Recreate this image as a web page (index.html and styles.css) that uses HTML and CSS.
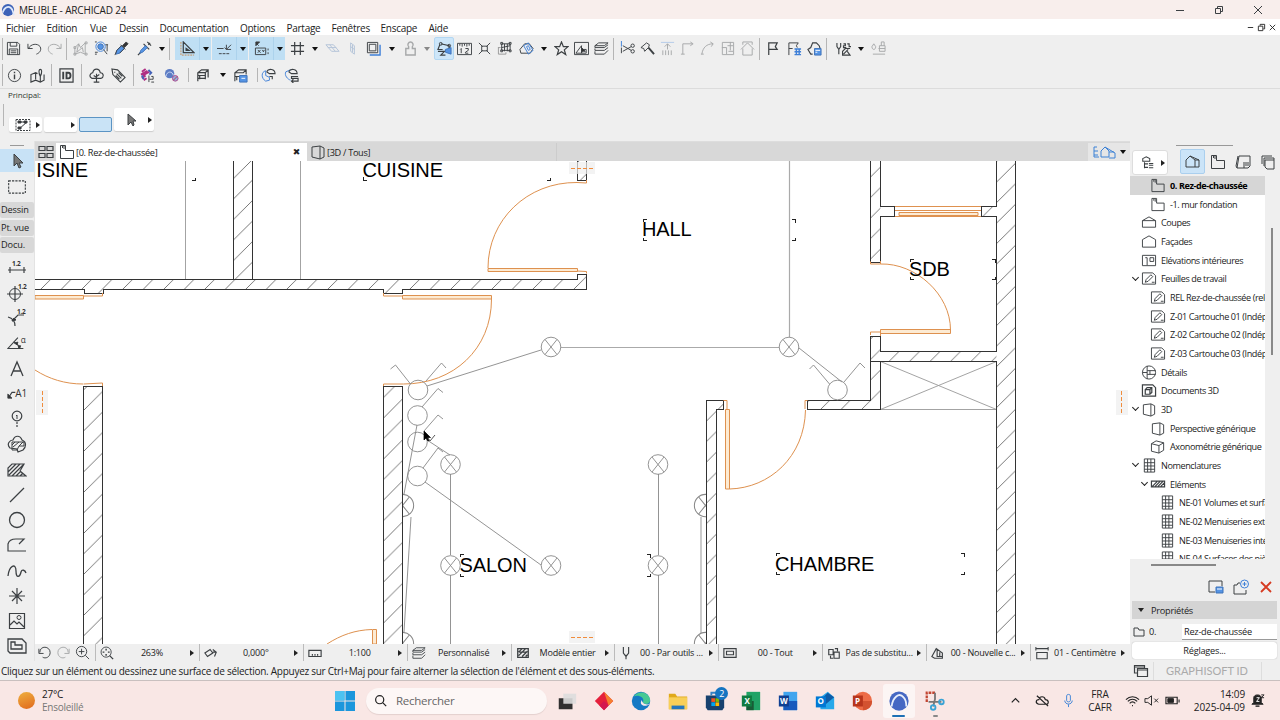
FILE: index.html
```html
<!DOCTYPE html>
<html lang="fr">

<head>
    <meta charset="UTF-8">
    <meta name="viewport" content="width=device-width, initial-scale=1.0">
    <title>MEUBLE - ARCHICAD 24</title>
    <link rel="stylesheet" href="styles.css">
</head>

<body>
    <!-- Shared symbols -->
    <svg class="defs" width="0" height="0">
        <symbol id="story" viewBox="0 0 16 16"><path d="M1.500 1.500h5v5h8v8h-13zM3.500 2v2M5 2v3"/></symbol>
        <symbol id="sheet" viewBox="0 0 16 16"><path d="M1 2h11l3 3v9H1zM4 12l1-3 5-5 2 2-5 5zM11 12h3"/></symbol>
        <symbol id="box3d" viewBox="0 0 16 16"><path d="M2 3l8-1v13l-8-2zM10 2l4 2v9l-4 2"/></symbol>
        <symbol id="grid" viewBox="0 0 16 16"><path d="M3 1h11v14H3zM3 5h11M3 8.500h11M3 12h11M6.500 1v14M10 1v14"/></symbol>
        <symbol id="lamp" viewBox="-11 -11 22 22"><circle r="9.800"/><path d="M-6 -7.500L6 7.500M6 -7.500L-6 7.500"/></symbol>
        <symbol id="layers" viewBox="0 0 16 16"><path d="M5 2h10l-4 3H1zM1 5v2h10l4-3M1 8v2h10l4-3M1 11v3h10l4-4"/></symbol>
        <symbol id="house" viewBox="0 0 16 16"><path d="M1 13V6l4-4 5 4v7zM5 2l9 4v7h-4M10 6h4"/></symbol>
    </svg>

    <!-- Title bar -->
    <header class="titlebar">
        <svg class="logo" viewBox="0 0 16 16"><circle cx="8" cy="8" r="7" fill="#3f63b8"/><path d="M2 11C4 4 10 2 13 8l2 6" stroke="#dfe8fb" stroke-width="2" fill="none"/></svg>
        <span class="title">MEUBLE - ARCHICAD 24</span>
        <div class="wincontrols">
            <svg class="ic" viewBox="0 0 16 16"><path d="M4 8.500h8"/></svg>
            <svg class="ic" viewBox="0 0 16 16"><path d="M4.500 6.500h5v5h-5zM6.500 6V4.500h5v5H10"/></svg>
            <svg class="ic" viewBox="0 0 16 16"><path d="M4 4l8 8M12 4l-8 8"/></svg>
        </div>
    </header>

    <nav class="menubar">
        <span class="m-fichier">Fichier</span>
        <span class="m-edition">Edition</span>
        <span class="m-vue">Vue</span>
        <span class="m-dessin">Dessin</span>
        <span class="m-doc">Documentation</span>
        <span class="m-options">Options</span>
        <span class="m-partage">Partage</span>
        <span class="m-fenetres">Fenêtres</span>
        <span class="m-enscape">Enscape</span>
        <span class="m-aide">Aide</span>
        <div class="doccontrols">
            <svg viewBox="0 0 10 10"><path d="M2 5h6"/></svg>
            <svg viewBox="0 0 10 10"><path d="M1.500 3.500h5v5h-5zM3.500 3V1.500h5v5H7"/></svg>
            <svg viewBox="0 0 10 10"><path d="M2 2l6 6M8 2L2 8"/></svg>
        </div>
    </nav>

    <!-- Toolbars -->
    <div class="toolbar first">
        <i class="sep g2"></i>
        <b class="tool"><svg class="ic" viewBox="0 0 16 16"><path d="M1.500 1.500h11l2 2v11h-13zM4.500 1.500v4h7v-4M3.500 14.500v-6h9v6M5 10.500h6M5 12.500h6"/></svg></b>
        <b class="tool g1"><svg class="ic" viewBox="0 0 16 16"><path d="M1 3v5h5M1.500 8C4 3 11 2 14 6c2 4-1 7-4 8"/></svg></b>
        <b class="tool off"><svg class="ic" viewBox="0 0 16 16"><path d="M15 3v5h-5M14.500 8C12 3 5 2 2 6c-2 4 1 7 4 8"/></svg></b>
        <i class="sep g2"></i>
        <b class="tool off g3"><svg class="ic" viewBox="0 0 16 16"><path d="M2 7l4-4 2 4 5-5v12l-5-2-6 2zM4 12l6-5 1 5M6 3l-2 9"/><path d="M1 6h2v2H1zM13 1h2v2h-2zM13 13h2v2h-2zM1 13h2v2H1z"/></svg></b>
        <b class="tool g1"><svg class="ic" viewBox="0 0 16 16"><circle class="fb" cx="7" cy="6" r="3"/><path d="M10 9l4 5M1 1h2M1 12h3M12 4h3M14 4v7M1 14h2"/><circle class="b" cx="7" cy="6" r="5"/></svg></b>
        <b class="tool"><svg class="ic" viewBox="0 0 16 16"><path class="fb" d="M2 14l1-4 5-5 3 3-5 5z"/><path d="M1 15l2-5 5-5M6 13l5-5M7 4l5 5"/><path class="fd" d="M9 5l4-4 2 2-4 4z"/></svg></b>
        <b class="tool g3"><svg class="ic" viewBox="0 0 16 16"><path stroke-width="1.300" d="M1 15l3-3M11 1l4 4M12 4l2-2M7 3l6 6"/><path class="fb" d="M4 10l5-5 2 2-5 5-3 1z"/></svg></b>
        <b class="caret g1"></b>
        <i class="sep"></i>
        <div class="group">
            <div class="pair"><b class="tool"><svg class="ic" viewBox="0 0 16 16"><path stroke-width="1.300" d="M3.500 1v11.500H15zM6.500 8v2h3z"/><path stroke="#c8874f" stroke-dasharray="2 1" d="M1 1v14h14"/></svg></b><b class="caret"></b></div>
            <div class="pair"><b class="tool"><svg class="ic" viewBox="0 0 16 16"><path d="M0 8h7M8 7l2 2 5-5M10 4v5h5"/><path stroke-dasharray="3 1" d="M2 13.500h12"/></svg></b><b class="caret"></b></div>
            <div class="pair"><b class="tool"><svg class="ic" viewBox="0 0 16 16"><path d="M1.500 7.500h11v7h-11zM4 9.500l3 3M7 9.500l-3 3M9 9.500l1 2 1-2M2 2l3 3M15 8v2M15 12v2"/><path class="fd" d="M2 1h4L2 5z"/></svg></b><b class="caret"></b></div>
        </div>
        <b class="tool g2"><svg class="ic" viewBox="0 0 16 16"><path stroke-width="1.300" d="M5 1v14M11 1v14M1 5h14M1 11h14"/></svg></b>
        <b class="caret g1"></b>
        <b class="tool off"><svg class="ic" viewBox="0 0 16 16"><path stroke="#5c83b8" d="M1 4h8l6 7H7zM5 4l6 7M3 7h9"/></svg></b>
        <b class="tool off"><svg class="ic" viewBox="0 0 16 16"><path stroke="#5c83b8" d="M6 2l4 3v9l-4-3zM6 6l4 3M8 4v8"/></svg></b>
        <b class="tool g1"><svg class="ic" viewBox="0 0 16 16"><path class="b" stroke-width="1.500" d="M4 15h11V4"/><path d="M1.500 1.500h11v11h-11zM3.500 3.500h7v7h-7z"/></svg></b>
        <b class="caret g2"></b>
        <b class="tool off g1"><svg class="ic" viewBox="0 0 16 16"><path stroke-width="1.500" d="M3 15V8h3V6C4 4 6 1 8 1s4 3 2 5v2h3v7z"/></svg></b>
        <b class="caret grey"></b>
        <b class="tool active"><svg class="ic" viewBox="0 0 16 16"><path stroke-width="1.200" d="M4 3l9 2v4M3 4L1 9h5M1 11h7l-4 4h5"/><path class="fb" d="M9 9l6-2v7l-6-2z"/><circle cx="4" cy="3" r="1.500"/><circle cx="13" cy="5" r="1.500"/></svg></b>
        <b class="tool"><svg class="ic" viewBox="0 0 16 16"><path d="M.5 2.500h15v12H.5zM3 3v2M5.500 3v3M8 3v2M10.500 3v3M13 3v2M3.500 9l1-1v5M9 8h3v2l-3 2v1h3"/></svg></b>
        <b class="tool"><svg class="ic" viewBox="0 0 16 16"><path d="M2 2l4 4M14 2l-4 4M2 14l4-4M14 14l-4-4M5 5.500h6v5H5z"/></svg></b>
        <b class="tool"><svg class="ic" viewBox="0 0 16 16"><path d="M5 3h9v7H5zM5 7l9-2M8 3v8M11 3v8"/><path d="M4 1.500h2v2H4zM13 1.500h2v2h-2zM4 9.500h2v2H4zM13 9.500h2v2h-2z"/><path stroke="#999" d="M1.500 7v7h8v-2M1 7h3"/></svg></b>
        <b class="tool g2"><svg class="ic" viewBox="0 0 16 16"><path d="M1 9l5-6h5l4 5-3 5H2z"/><path class="b" d="M5 5l5-3 5 8-5 4zM8 6l2-1 2 4-2 1z"/></svg></b>
        <b class="caret g1"></b>
        <b class="tool"><svg class="ic" viewBox="0 0 16 16"><path stroke-width="1.300" d="M8 1l2 5h5l-4 3.500 1.500 5L8 11.500l-4.500 3L5 9.500 1 6h5z"/></svg></b>
        <b class="tool"><svg class="ic" viewBox="0 0 16 16"><path d="M.5 1.500h15v13H.5zM2 13L8 5v8zM8 9h5v4H8z"/><path class="fd" d="M8 7l4 4-2 0-2 1z"/></svg></b>
        <b class="tool"><svg class="ic"><use href="#layers"/></svg></b>
        <i class="sep g2"></i>
        <b class="tool g3"><svg class="ic" viewBox="0 0 16 16"><path class="b" d="M1.500 0v6"/><path d="M1.500 7v6M3 5l9 5M3 11l9-5"/><circle cx="13.500" cy="5" r="1.800"/><circle cx="13.500" cy="11" r="1.800"/></svg></b>
        <b class="tool"><svg class="ic" viewBox="0 0 16 16"><path d="M1 7l6-5 3 2-1 3-4 4-1-3z"/><path stroke-width="2" d="M9 7l6 7"/></svg></b>
        <b class="tool off"><svg class="ic" viewBox="0 0 16 16"><path stroke="#5c95e0" d="M1 1.500h14"/><path d="M8 3v6M5 6l3-3 3 3M3 10v5M6 10v5M9 10v5M12 10v5"/></svg></b>
        <b class="tool off"><svg class="ic" viewBox="0 0 16 16"><path d="M3 14V3h10M11 1l3 2-3 2M1 14h4"/></svg></b>
        <b class="tool off"><svg class="ic" viewBox="0 0 16 16"><path d="M2 14C3 7 7 3 14 3M11 1l3 2-2 3M1 14h3"/></svg></b>
        <b class="tool off"><svg class="ic" viewBox="0 0 16 16"><path d="M2.500 1.500h12v13h-12zM2 7h5v7M8 5h6M11 1v9M9 11h5"/></svg></b>
        <b class="tool off"><svg class="ic" viewBox="0 0 16 16"><path d="M1 9l7-7 7 7M3 8v7h10V8M3 4V1h10v3"/></svg></b>
        <i class="sep g2"></i>
        <b class="tool g2"><svg class="ic" viewBox="0 0 16 16"><path stroke-width="1.300" d="M4 15V2h9l-2 4 2 3H4"/></svg></b>
        <b class="tool g2"><svg class="ic" viewBox="0 0 16 16"><path d="M2 15V2h10l-2 3 1 2M2 8h4"/><path class="b" stroke-width="1.500" d="M8 8.500h7M8 11.500h7M8 14.500h7M10 8v7M13 8v7"/></svg></b>
        <b class="tool"><svg class="ic" viewBox="0 0 16 16"><path stroke-width="1.200" d="M6 14H4l-3-5 3-2 2-5h4l3 3 1 3"/><path class="fb" d="M8 8h7v7H8z"/><path stroke="#fff" d="M9 10h5M9 12h2"/></svg></b>
        <i class="sep g2"></i>
        <b class="tool g6"><svg class="ic" viewBox="0 0 16 16"><path stroke-width="1.200" d="M1 2v4l2 3v5M5 2v4L3 9M8 3h2v2H8v2h3M12 3h2v3h2M15 8h-5l-3 3v4h8l-3-4M8 14l5-5"/></svg></b>
        <b class="caret g1"></b>
        <b class="tool off"><svg class="ic" viewBox="0 0 16 16"><path d="M3 3L1 6c0 4 4 4 4 0zM9 5h6v6H9zM11 5V1h3v4M2 14h13M8 8h7"/></svg></b>
    </div>
    <div class="toolbar second">
        <i class="sep g2"></i>
        <b class="tool g1"><svg class="ic" viewBox="0 0 16 16"><circle cx="8" cy="8" r="6.500"/><path stroke-width="1.500" d="M8 7v5M8 4v1.500"/></svg></b>
        <b class="tool g3"><svg class="ic" viewBox="0 0 16 16"><path stroke-width="1.200" d="M8 6L6 5 1 7v8l5-2 5 2 4-2V7M6 5v7M11 9v5M11 9c-5-10 5-10 0 0"/></svg></b>
        <i class="sep g4"></i>
        <b class="tool g4"><svg class="ic" viewBox="0 0 16 16"><path stroke-width="1.300" d="M1 1h14v14H1z"/><path stroke-width="2" d="M4.500 4v8M8 5h2c3 0 3 6 0 6H8z"/></svg></b>
        <i class="sep g5"></i>
        <b class="tool g4"><svg class="ic" viewBox="0 0 16 16"><path stroke-width="1.200" d="M3 11c-4-2-1-6 1-6C5 0 11 0 12 5c4 0 4 5 1 6zM8 6v9M8 10L5 8M8 9l3-2M5 15h6"/></svg></b>
        <b class="tool g2"><svg class="ic" viewBox="0 0 16 16"><path stroke-width="1.200" d="M1 1l6 1 8 8-5 5-8-8zM4 4v1M6 6l5 5M8 5l4 4M5 8l4 4"/></svg></b>
        <i class="sep g5"></i>
        <b class="tool g3"><svg class="ic" viewBox="0 0 16 16"><path stroke="#b02e83" stroke-width="2" d="M2 4l4-3M1 7l7-4M3 8l7-4M2 11l4-3M4 13l3-2"/><path stroke="#4462b8" stroke-width="2" d="M9 2l3 3-2 2M2 8l2 4"/><path d="M9.500 8v7M12 9h2v3h-2M10 12h2M12 15h3"/></svg></b>
        <b class="tool g4"><svg class="ic" viewBox="0 0 16 16"><circle cx="6" cy="6" r="5" fill="#5c7cc4" stroke="none"/><path stroke="#d4def4" d="M2 9c1-6 7-6 8-1"/><circle cx="12" cy="11" r="3" stroke="#b0478d" fill="#8fb5dc"/><path stroke="#c0385a" d="M10 13l4-4"/></svg></b>
        <i class="sep g7 short"></i>
        <b class="tool g3"><svg class="ic" viewBox="0 0 16 16"><path stroke-width="1.300" d="M3 14V5l4-3h7v8M3 5h8l3-3M11 5v7M3 8h8M5 8v4M3 11h8"/></svg></b>
        <b class="caret g4"></b>
        <b class="tool"><svg class="ic" viewBox="0 0 16 16"><path stroke-width="1.200" d="M2 14V5l4-3h8v5M2 5h9l3-3M2 9h6M4 9v4"/><path class="fb" d="M7 8h8v7H7z"/><path stroke="#fff" d="M9 11h4"/></svg></b>
        <i class="sep g7 short"></i>
        <b class="tool"><svg class="ic" viewBox="0 0 16 16"><path class="b" d="M5 3c-5 1-5 8 0 11l4-1v-3L5 8z"/><path stroke-width="1.200" d="M6 4c2-4 9-3 9 2H9L6 4M9 9h3v3"/></svg></b>
        <b class="tool g3"><svg class="ic" viewBox="0 0 16 16"><path class="b" d="M2 4C0 8 4 12 7 13M2 4l5-2"/><path stroke-width="1.200" d="M5 4c2-4 9-3 9 2H8L5 4M15 9H8v2h7v3H8M10 12l-2 2 2 2"/></svg></b>
    </div>

    <div class="infobox">
        <div class="infolabel">Principal:</div>
        <div class="inforow">
            <i class="grip"></i>
            <div class="field"><svg class="ic" viewBox="0 0 16 16"><path stroke-dasharray="2 1" d="M1 2.500h14v11H1z"/><path d="M3 5h9L4 12"/><path class="fd" d="M3 4h3v2H3zM9 4h3v2H9zM3 10h3v2H3z"/></svg><i class="rt"></i></div>
            <div class="field"><i class="rt"></i></div>
            <div class="field selected"></div>
            <div class="field tall"><svg class="ic" viewBox="0 0 16 16"><path class="arrow" d="M5 2v11l3-3 2 4 1-1-1-4h3z"/></svg><i class="rt"></i></div>
        </div>
    </div>

    <main class="workspace">
        <!-- Toolbox -->
        <aside class="toolbox">
            <i class="handle"></i>
            <b class="tb on"><svg class="ic" viewBox="0 0 16 16"><path class="arrow" d="M5 1v12l3-3 2 5 2-1-2-4h4z"/></svg></b>
            <b class="tb"><svg class="ic wide" viewBox="0 0 18 16"><path stroke-dasharray="2 1" d="M1.500 2.500h15v11h-15z"/></svg></b>
            <div class="tlabel">Dessin</div>
            <div class="tlabel">Pt. vue</div>
            <div class="tlabel">Docu.</div>
            <b class="tb"><svg class="ic wide" viewBox="0 0 20 18"><path stroke-width="1.200" d="M1 11h18M3 8v6M17 8v6"/><text x="5" y="7">1.2</text></svg></b>
            <b class="tb"><svg class="ic wide" viewBox="0 0 20 18"><circle cx="8" cy="10" r="5.500"/><path stroke-width="1.200" d="M8 2v16M0 10h16"/><text x="11" y="5">1.2</text></svg></b>
            <b class="tb"><svg class="ic wide" viewBox="0 0 20 18"><path stroke-width="1.200" d="M1 8c4 1 7 4 7 9M5 12l6-6h6"/><path class="fd" d="M5 12l4-1-2-2z"/><text x="10" y="5">1.2</text></svg></b>
            <b class="tb"><svg class="ic wide" viewBox="0 0 22 18"><path stroke-width="1.200" d="M12 3L1 15h17M7 8c4 1 6 3 6 7"/><path class="fd" d="M8 9l4-1-1 3zM12 12h3l-1 3z"/><text class="al" x="15" y="9">α</text></svg></b>
            <b class="tb"><svg class="ic wide" viewBox="0 0 20 18"><path stroke-width="1.300" d="M4 16L10 2l6 14M6 11h8"/></svg></b>
            <b class="tb"><svg class="ic wide" viewBox="0 0 24 18"><path stroke-width="1.300" d="M2 13l4-6h4"/><path class="fd" d="M1 14v-5l5 5z"/><text class="a1" x="10" y="12">A1</text></svg></b>
            <b class="tb"><svg class="ic wide" viewBox="0 0 20 18"><circle cx="10" cy="6" r="4.800" stroke-width="1.200"/><path d="M9 6l1-1v4"/><path stroke-width="1.200" stroke-dasharray="2 1" d="M10 12v6"/></svg></b>
            <b class="tb"><svg class="ic wide" viewBox="0 0 20 18"><path stroke-width="1.200" d="M3 13c-4-4 0-8 3-8 2-5 7-5 9 0 5 2 4 7 1 10l-5 2-1-3z"/><path class="hat" d="M5 7h12v4h-5l-2 4H5zM5 10l3-3M6 12l6-5M12 11l4-4"/></svg></b>
            <b class="tb"><svg class="ic wide" viewBox="0 0 20 18"><path stroke-width="1.200" d="M1 15V7l4-4h12l-4 7 6 5zM2 14L13 3M5 15L16 4M9 15l5-5M13 15l3-3M1 11l8-8"/></svg></b>
            <b class="tb"><svg class="ic wide" viewBox="0 0 20 18"><path stroke-width="1.300" d="M3 16L17 2"/></svg></b>
            <b class="tb"><svg class="ic wide" viewBox="0 0 20 18"><circle stroke-width="1.300" cx="10" cy="9" r="7.500"/></svg></b>
            <b class="tb"><svg class="ic wide" viewBox="0 0 20 18"><path stroke-width="1.200" d="M19 15H1V8c1-4 4-5 8-5h8l-5 5"/></svg></b>
            <b class="tb"><svg class="ic wide" viewBox="0 0 20 18"><path stroke-width="1.300" d="M1 14C2 4 9 0 9 9c0 8 4 6 5 1 1-3 4-2 5 1"/></svg></b>
            <b class="tb"><svg class="ic wide" viewBox="0 0 20 18"><path stroke-width="1.200" d="M10 1v16M2 9h16M5 4l10 10M15 4L5 14"/></svg></b>
            <b class="tb"><svg class="ic wide" viewBox="0 0 20 18"><path stroke-width="1.200" d="M2.500 1.500h15v15h-15zM3 13l4-4 3 3 2-2 5 5"/><circle cx="12" cy="5.500" r="2"/></svg></b>
            <b class="tb"><svg class="ic wide" viewBox="0 0 20 18"><path stroke-width="1.300" d="M1 2h14l4 4v10H3l-2-2zM4 5h4v3h7v4H4z"/></svg></b>
        </aside>

        <section class="center">
            <div class="tabs">
                <b class="overview"><svg class="ic wide" viewBox="0 0 16 16"><path stroke-width="1.200" d="M1 2.500h6v4H1zM9 2.500h6v4H9zM1 9.500h6v4H1zM9 9.500h6v4H9z"/></svg></b>
                <div class="tab current"><svg class="ic"><use href="#story"/></svg><span>[0. Rez-de-chaussée]</span><em>✖</em></div>
                <div class="tab"><svg class="ic"><use href="#box3d"/></svg><span>[3D / Tous]</span></div>
                <div class="tabnav"><svg class="ic wide blue" viewBox="0 0 24 16"><path d="M1 3h3M1 7h4M1 11h4M1 3v10h5M8 13V7l4-4 4 4v6zM12 3l10 6v5h-6M16 8h5"/></svg><b class="caret"></b></div>
            </div>

            <!-- Floor plan, drawn in window coordinates -->
            <svg class="plan" viewBox="35 161 1095 483">
                <defs>
                    <pattern id="hatch" x="2" width="20.500" height="20.500" patternUnits="userSpaceOnUse"><path d="M0 20.500L20.500 0"/></pattern>
                    <pattern id="hatchB" x="0" width="20.500" height="20.500" patternUnits="userSpaceOnUse"><path d="M0 20.500L20.500 0"/></pattern>
                    <pattern id="hatchC" x="10.200" width="20.500" height="20.500" patternUnits="userSpaceOnUse"><path d="M0 20.500L20.500 0"/></pattern>
                    <clipPath id="room"><path d="M403 161h303v483H403z"/></clipPath>
                </defs>

                <g class="fills">
                    <path fill="url(#hatch)" d="M233 161h19.500v118H233zM35 279h542v-5h9.500v15H402.500v4H383v-4H103v4H83.500v-4H35zM83.500 386.500H103V644H83.500zM383 386.500h19.500V644H383zM577 161h9.500v19H577zM870.500 161h10v101h-10z"/>
                    <path fill="url(#hatchB)" d="M706.500 400.500h17v9h-7V644h-10zM807.500 400.500h63v-64h10v15h116v10h-116v48h-73z"/>
                    <path fill="url(#hatchC)" d="M996.500 161h19v483h-19zM980.500 206.500h16v10h-16z"/>
                </g>
                <g class="thin">
                    <path d="M185.500 161v118M300.500 161v118M880.500 361.500h116v48h-116zM880.500 361.500l116 48M996.500 361.500l-116 48"/>
                </g>
                <g class="wall">
                    <path d="M233.500 161v118M252.500 161v118M35 279.500h542M577.500 279.500v-5h9v15h-184v4h-19v-4h-280v4h-19v-4H35"/>
                    <path d="M83.500 644V386.500h19V644M383.500 644V386.500h19V644M577.500 161v19h9v-19"/>
                    <path d="M870.500 161v101h10v-45.500h14v-10h-14V161M996.500 161v45.500h-15v10h15v135h-116v-15h-10v64h-63v9h73v-48M870.500 361.500h126V644M1015.500 161v483"/>
                    <path d="M706.500 644V400.500h17v9h-7V644"/>
                </g>
                <g class="door">
                    <path class="leaf" d="M488 268.500h89.500v3H488zM402.500 295.500h89v3.500h-89zM35 295.500h48.500v3.500H35zM880.500 329.500h70v4h-70zM725.500 409.500h4v79.500h-4zM899 212.500h79v3h-79zM372.500 629.500h4V644h-4z"/>
                    <path d="M488 268C488 220 527 182 577 182.500l9.500 .5v-3M577 271l9.500 .5v2M491.500 299c0 50-38 85-88 85h-20v2M83.500 296h19v-3M383.500 293v3h19M35 370c14 9 30 14 48 14M83.500 384l19-1v3M870.500 261.500v2.500h10c35-1 70 30 70 66M880.500 261v3M870.500 335v-3h10v4M723.500 400.500h3.500v9M729.500 489c40-1 75-32 76-79M805 409v-8.500h2.500M895 206.500h86M895 210.500h86M895 216.500h86M327 644c14-9 28-14 45-14.500"/>
                </g>

                <g class="wire">
                    <path d="M561 347.500h218M789.500 161v176M701 517v116" class="soft"/>
                    <path d="M427 386l114-36M799 348l43 34M427 440l23 15M425 482l116 83M450.500 474v81M450.500 575v69M658.500 474v81M658.500 575v69M417 425l-13 69M411 517l-7 115"/>
                    <circle cx="418" cy="390" r="9.800"/><circle cx="417.500" cy="415.500" r="9.800"/><circle cx="417.500" cy="442" r="9.800"/><circle cx="417.500" cy="476" r="9.800"/><circle cx="837.500" cy="390" r="9.800"/>
                    <path d="M426 381l15.500-18 4.500 5M410.500 384l-15-19-5 4M422 407l16-18.500 5 4M424 431l14-16 5 4M423 468l15-20 5 4M829.500 384l-16-19-4 4M844 382l16-19 5 5"/>
                    <use href="#lamp" x="540" y="336" width="22" height="22"/>
                    <use href="#lamp" x="778" y="336" width="22" height="22"/>
                    <use href="#lamp" x="439.500" y="453.500" width="22" height="22"/>
                    <use href="#lamp" x="647" y="453.500" width="22" height="22"/>
                    <use href="#lamp" x="439.500" y="554.500" width="22" height="22"/>
                    <use href="#lamp" x="540" y="554.500" width="22" height="22"/>
                    <use href="#lamp" x="647" y="554.500" width="22" height="22"/>
                    <g clip-path="url(#room)">
                        <use href="#lamp" x="390" y="493" width="25" height="25"/>
                        <use href="#lamp" x="390" y="631" width="25" height="25"/>
                        <use href="#lamp" x="693" y="493" width="25" height="25"/>
                        <use href="#lamp" x="693" y="631" width="25" height="25"/>
                    </g>
                </g>

                <!-- Text box corners -->
                <g class="corners">
                    <path d="M643.500 222v-2.500h3M643.500 238v2.500h3M792 219.500h3v3M792 240.500h3v-3M363.500 177v3.500h3M547 180.500h3v-3M192 180.500h3v-3M460.500 557v-2.500h3M460.500 574v2.500h3M647 554.500h3v3M647 576.500h3v-3M910.500 262v-2.500h3M910.500 277v2.500h3M992 259.500h3v3M992 279.500h3v-3M776.500 556v-2.500h3M776.500 572v2.500h3M961 553.500h3v3M961 574.500h3v-3"/>
                </g>
                <g class="rooms">
                    <text x="7.500" y="177">CUISINE</text>
                    <text x="362.500" y="177">CUISINE</text>
                    <text x="642" y="236">HALL</text>
                    <text x="909" y="275.500">SDB</text>
                    <text x="459.500" y="572">SALON</text>
                    <text x="775" y="571">CHAMBRE</text>
                </g>

                <g class="snap">
                    <path class="chip" d="M36 390h12v25H36zM1116 390h12v25h-12zM569 162h26v12h-26zM569 631h26v12h-26z"/>
                    <path d="M42.500 391v23"/>
                    <path d="M1121.500 391v23"/>
                    <path d="M571 168.500h22"/>
                    <path d="M571 637.500h22"/>
                </g>
                <path class="cursor" d="M424 431v9l2-2 2 3 1-.5-1.500-3h3z"/>
                <path class="tick" d="M428 438l2 3 5-6"/>
            </svg>

            <div class="quickbar">
                <div class="views">
                    <svg class="ic" viewBox="0 0 16 16"><path d="M2 9V4M2 9h5M3 8c0-8 11-7 11 0 0 5-5 7-8 5"/></svg>
                    <svg class="ic off" viewBox="0 0 16 16"><path d="M14 9V4M14 9H9M13 8C13 0 2 1 2 8c0 5 5 7 8 5"/></svg>
                    <svg class="ic" viewBox="0 0 16 16"><circle cx="7" cy="7" r="5.500"/><path d="M4 7h6M7 4v6M11 11l4 4"/></svg>
                </div>
                <div class="opt zoomopt"><svg class="ic" viewBox="0 0 16 16"><circle cx="7" cy="7" r="5.800"/><path stroke-width="1.600" d="M11 11l4 4M7 3v2M7 9v2M3 7h2M9 7h2"/></svg><span>263%</span><i class="rt"></i></div>
                <div class="opt"><svg class="ic" viewBox="0 0 16 16"><path stroke-width="1.300" d="M1 8l6-4 3 4-6 4zM10 4l4 3-2 5M14 7h-4"/></svg><span>0,000°</span><i class="rt"></i></div>
                <div class="opt"><svg class="ic" viewBox="0 0 16 16"><path stroke-width="1.300" d="M1 5h14v7H1zM5 9v2M8 9v2M11 9v2"/></svg><span>1:100</span><i class="rt"></i></div>
                <div class="opt"><svg class="ic"><use href="#layers"/></svg><span>Personnalisé</span><i class="rt"></i></div>
                <div class="opt"><svg class="ic" viewBox="0 0 16 16"><path stroke-width="1.500" d="M2 3h12v10H2zM3 7l4-4M3 11l8-8M7 12l6-6M4 7h8M11 12l2-2"/></svg><span>Modèle entier</span><i class="rt"></i></div>
                <div class="opt"><svg class="ic" viewBox="0 0 16 16"><path stroke-width="1.300" d="M5 1v7l3 4 3-4V1M8 10v5"/></svg><span>00 - Par outils ...</span><i class="rt"></i></div>
                <div class="opt"><svg class="ic" viewBox="0 0 16 16"><path stroke-width="1.300" d="M1 3h14v10H1zM4 6h8v4H4z"/></svg><span>00 - Tout</span><i class="rt"></i></div>
                <div class="opt"><svg class="ic" viewBox="0 0 16 16"><path stroke-width="1.300" d="M2 4h5v6H2zM8 7h6v7H8zM9 3h3v3M4 11v3h3"/></svg><span>Pas de substitu...</span><i class="rt"></i></div>
                <div class="opt"><svg class="ic" viewBox="0 0 16 16"><path stroke-width="1.300" d="M1 12l5-9 7 5v6H4zM7 3v9h6M10 7v5"/></svg><span>00 - Nouvelle c...</span><i class="rt"></i></div>
                <div class="opt last"><svg class="ic" viewBox="0 0 16 16"><path stroke-width="1.200" d="M1 3h14M1 1v4M15 1v4M2 7.500h12v7H2z"/></svg><span>01 - Centimètre</span><i class="rt"></i></div>
            </div>
        </section>

        <!-- Navigator -->
        <aside class="navigator">
            <i class="handle"></i>
            <div class="navtabs">
                <div class="chooser"><svg class="ic" viewBox="0 0 16 16"><path stroke-width="1.200" d="M2 3l4-2 4 2v3H2zM4 7v7M4 9h4M4 13h4M9 8.500h5M9 10.500h5M9 13.500h5"/></svg><i class="rt"></i></div>
                <b class="nt on"><svg class="ic"><use href="#house"/></svg></b>
                <b class="nt"><svg class="ic"><use href="#story"/></svg></b>
                <b class="nt"><svg class="ic" viewBox="0 0 16 16"><path d="M4 2h11v10l-2 2H2L4 2zM2 14L1 12 3 2M10 9h4M10 11h4M9 8v6"/></svg></b>
                <b class="nt"><svg class="ic" viewBox="0 0 16 16"><path d="M2 10V2h10M4 12V4h10v2M5 6h9v9H7l-2-2z"/></svg></b>
            </div>
            <div class="treewrap">
                <div class="tree">
                    <div class="row l2 picked"><svg class="ic"><use href="#story"/></svg>0. Rez-de-chaussée</div>
                    <div class="row l2"><svg class="ic"><use href="#story"/></svg>-1. mur fondation</div>
                    <div class="row l1"><svg class="ic" viewBox="0 0 16 16"><path d="M1 6l7-4 7 4v7H1zM1 6h14"/></svg>Coupes</div>
                    <div class="row l1"><svg class="ic" viewBox="0 0 16 16"><path d="M1 6l7-4 7 4v8H1z"/></svg>Façades</div>
                    <div class="row l1"><svg class="ic" viewBox="0 0 16 16"><path d="M1 2.500h14v11H1zM4 5h2v8M9 5h4v4H9z"/></svg>Elévations intérieures</div>
                    <div class="row l1"><i class="open"></i><svg class="ic"><use href="#sheet"/></svg>Feuilles de travail</div>
                    <div class="row l2"><svg class="ic"><use href="#sheet"/></svg>REL Rez-de-chaussée (relevé)</div>
                    <div class="row l2"><svg class="ic"><use href="#sheet"/></svg>Z-01 Cartouche 01 (Indépendant)</div>
                    <div class="row l2"><svg class="ic"><use href="#sheet"/></svg>Z-02 Cartouche 02 (Indépendant)</div>
                    <div class="row l2"><svg class="ic"><use href="#sheet"/></svg>Z-03 Cartouche 03 (Indépendant)</div>
                    <div class="row l1"><svg class="ic" viewBox="0 0 16 16"><circle cx="8" cy="8" r="7"/><path d="M6 1v14M6 6h9M6 10h9M1 8h5M9 6v4"/></svg>Détails</div>
                    <div class="row l1"><svg class="ic" viewBox="0 0 16 16"><path stroke-width="1.300" d="M1 2h11l3 3v9H1zM4 7l2-2h5v5l-2 2H4zM4 7h5v5M9 7l2-2"/></svg>Documents 3D</div>
                    <div class="row l1"><i class="open"></i><svg class="ic"><use href="#box3d"/></svg>3D</div>
                    <div class="row l2"><svg class="ic"><use href="#box3d"/></svg>Perspective générique</div>
                    <div class="row l2"><svg class="ic" viewBox="0 0 16 16"><path d="M1 5l8 2v8l-8-2zM9 7l5-3v8l-5 3M1 5l5-3 8 2"/></svg>Axonométrie générique</div>
                    <div class="row l1"><i class="open"></i><svg class="ic"><use href="#grid"/></svg>Nomenclatures</div>
                    <div class="row l2"><i class="open"></i><svg class="ic" viewBox="0 0 16 16"><path stroke-width="1.300" d="M1 4.500h14v6H1zM2 10l5-5M5 10l5-5M8 10l5-5M11 10l4-4"/></svg>Eléments</div>
                    <div class="row l3"><svg class="ic"><use href="#grid"/></svg>NE-01 Volumes et surfaces</div>
                    <div class="row l3"><svg class="ic"><use href="#grid"/></svg>NE-02 Menuiseries extérieures</div>
                    <div class="row l3"><svg class="ic"><use href="#grid"/></svg>NE-03 Menuiseries intérieures</div>
                    <div class="row l3"><svg class="ic"><use href="#grid"/></svg>NE-04 Surfaces des pièces</div>
                </div>
                <i class="vscroll"></i>
            </div>
            <i class="hscroll"></i>
            <div class="actions">
                <svg class="ic" viewBox="0 0 16 16"><path d="M7 13H1V2h13v5"/><path class="fb" d="M8 8h7v6H8z"/><path stroke="#fff" d="M9 10h5"/></svg>
                <svg class="ic" viewBox="0 0 16 16"><path d="M7 4H5L4 6H1v9h12v-4"/><circle class="b" cx="11.500" cy="5" r="4"/><path class="b" d="M9.500 5h4M11.500 3v4"/></svg>
                <svg class="ic" viewBox="0 0 16 16"><path stroke="#d63b22" stroke-width="1.800" d="M3 3l10 10M13 3L3 13"/></svg>
            </div>
            <div class="prophead"><i class="dn"></i>Propriétés</div>
            <div class="proprow"><svg class="ic" viewBox="0 0 16 16"><path d="M3 12V4h4l1 2h5v6z"/></svg><span>0.</span><div class="input">Rez-de-chaussée</div></div>
            <div class="button">Réglages...</div>
        </aside>
    </main>

    <footer class="status">
        <span class="hint">Cliquez sur un élément ou dessinez une surface de sélection. Appuyez sur Ctrl+Maj pour faire alterner la sélection de l'élément et des sous-éléments.</span>
        <svg class="ic" viewBox="0 0 16 16"><path stroke-width="1.200" d="M4.500 5.500h10v8h-10zM4 10H1.500V2.500h10V5M1.500 4h10M4.500 7h10"/></svg>
        <span class="gid">GRAPHISOFT ID</span>
    </footer>

    <!-- Windows taskbar -->
    <div class="taskbar">
        <div class="weather">
            <i class="sun"></i>
            <div><p>27°C</p><p class="dim">Ensoleillé</p></div>
        </div>
        <svg class="start" viewBox="0 0 20 20"><path fill="#1b96dc" d="M0 0h9.500v9.500H0zM10.500 0H20v9.500h-9.500zM0 10.500h9.500V20H0zM10.500 10.500H20V20h-9.500z"/><path fill="#4cc2f1" d="M0 0h9.500v9.500H0z"/></svg>
        <div class="search"><svg viewBox="0 0 16 16"><circle cx="7" cy="7" r="5"/><path d="M11 11l4 4"/></svg><span>Rechercher</span></div>
        <div class="apps">
            <b><svg viewBox="0 0 24 24"><path fill="#303030" d="M3 9h15v12H3z"/><path fill="#ddd" opacity=".9" d="M8 4h14v11H8z"/></svg></b>
            <b><svg viewBox="0 0 24 24"><path fill="#e5203c" d="M12 2L22 12 12 22 2 12z"/><path fill="#f5802f" d="M12 2L22 12l-5 5z"/><path fill="#d3184f" d="M12 22L7 17l5-5 5 5z"/></svg></b>
            <b><svg viewBox="0 0 24 24"><circle cx="12" cy="12" r="10" fill="#1479c4"/><path fill="#46c994" d="M4 7C9 0 21 2 22 11c0 5-6 5-8 3 3-7-6-9-10-7z"/><path fill="#f8e9e8" d="M22 15c-6 5-13 1-9-4 0 4 5 6 9 4z"/></svg></b>
            <b><svg viewBox="0 0 24 24"><path fill="#e0a91b" d="M2 4h7l2 3h11v14H2z"/><path fill="#f8cf58" d="M2 8h20v13H2z"/><path fill="#2476bd" d="M5 17h14v4H5z"/></svg></b>
            <b><svg viewBox="0 0 24 24"><path fill="#18416e" d="M2 6h20v13l-2 3H4l-2-3z"/><path fill="none" stroke="#3682c5" stroke-width="2" d="M8 6V3h8v3"/><path fill="#f25022" d="M8 9h4v4H8z"/><path fill="#7fba00" d="M12.500 9h4v4h-4z"/><path fill="#00a4ef" d="M8 13.500h4v4H8z"/><path fill="#ffb900" d="M12.500 13.500h4v4h-4z"/></svg><em class="badge">2</em></b>
            <b><svg viewBox="0 0 24 24"><path fill="#21a366" d="M7 2h15v20H7z"/><path fill="#185c37" d="M7 12h8v10H7z"/><path fill="#107c41" d="M2 6h11v12H2z"/></svg><em class="letter">X</em></b>
            <b><svg viewBox="0 0 24 24"><path fill="#41a5ee" d="M7 2h15v20H7z"/><path fill="#185abd" d="M7 12h15v10H7z"/><path fill="#103f91" d="M2 6h11v12H2z"/></svg><em class="letter">W</em></b>
            <b><svg viewBox="0 0 24 24"><path fill="#28a8ea" d="M7 8l8-6 7 6v13H7z"/><path fill="#0f5ca8" d="M9 9l6-6 7 5-11 9z"/><path fill="#0078d4" d="M2 7h11v12H2z"/></svg><em class="letter">O</em></b>
            <b><svg viewBox="0 0 24 24"><circle cx="13" cy="12" r="10" fill="#ed6c47"/><path fill="#d35230" d="M13 12h10c0 6-4 10-10 10z"/><path fill="#b7351c" d="M2 6h11v12H2z"/></svg><em class="letter">P</em></b>
            <b class="running"><svg viewBox="0 0 24 24"><circle cx="12" cy="12" r="10.500" fill="#4668c3"/><path fill="none" stroke="#e8effc" stroke-width="2" d="M4 18C5 8 12 2 17 8c3 3 3 7 3 10"/></svg></b>
            <b class="opened"><svg viewBox="0 0 24 24"><path fill="none" stroke="#c24632" stroke-width="2.500" stroke-dasharray="3 1" d="M12 3H3v10"/><path fill="none" stroke="#777" stroke-width="2" d="M12 3v7l-2 8M5 13h14"/><g fill="none" stroke="#3aa3d5" stroke-width="2"><circle cx="19" cy="13" r="2.500"/><circle cx="10" cy="19" r="2.500"/></g></svg></b>
        </div>
        <div class="tray">
            <svg class="t-up" viewBox="0 0 16 16"><path stroke-width="1.300" d="M4 10l4-4 4 4"/></svg>
            <svg class="t-cloud" viewBox="0 0 16 16"><path stroke-width="1.300" d="M4 12c-4-1-3-5 0-5 1-4 6-4 7 0 4 0 4 5 1 5zM2 3l12 11"/></svg>
            <svg class="t-mic blue" viewBox="0 0 16 16"><path d="M6 3c0-2 4-2 4 0v5c0 2-4 2-4 0zM4 8c0 5 8 5 8 0M8 12v3"/></svg>
            <div class="lang">FRA<br>CAFR</div>
            <svg class="t-wifi" viewBox="0 0 16 16"><path stroke-width="1.200" d="M1 7c4-4 10-4 14 0M3 9c3-3 7-3 10 0M5 11c2-2 4-2 6 0M7.500 13.500h1"/></svg>
            <svg class="t-vol" viewBox="0 0 16 16"><path d="M1 6h3l4-3v10L4 10H1zM11 6l4 4M15 6l-4 4"/></svg>
            <svg class="t-bat" viewBox="0 0 16 16"><path stroke-width="1.200" d="M1 4.500h12v7H1zM15 7v3"/><path fill="#222" d="M3 6h6v4H3z"/></svg>
            <div class="clock">14:09<br>2025-04-09</div>
            <svg class="t-bell" viewBox="0 0 16 16"><path fill="#222" d="M2 12l2-2V5c0-4 8-4 8 0v5l2 2zM6 14h4z"/><path stroke="#fff" d="M7 5h3l-3 4h3"/><path d="M12 2h3l-3 3h3"/></svg>
        </div>
    </div>
</body>

</html>
```
FILE: styles.css
```css
* {
    box-sizing: border-box;
}

body {
    margin: 0;
    width: 1280px;
    height: 720px;
    overflow: hidden;
    display: flex;
    flex-direction: column;
    background-color: #efefef;
    font-family: "Open Sans", "Noto Sans", sans-serif;
    font-size: 9.2px;
    letter-spacing: -0.25px;
    color: #222;
}

.defs {
    position: absolute;
}

svg {
    display: block;
    flex: none;
    fill: none;
    stroke: #3c4043;
}

.ic {
    width: 16px;
    height: 16px;
}

.b {
    stroke: #3f80d8;
}

.fb {
    fill: #5594e4;
    stroke: #3f72b8;
}

.fd {
    fill: #333;
}

.arrow {
    fill: #777;
}

.off {
    opacity: 0.4;
}

.blue,
.blue path {
    stroke: #3d82d6;
}

i, em, b {
    font-style: normal;
    flex: none;
}

p {
    margin: 0;
}

/* Title bar */
.titlebar {
    height: 19px;
    flex: none;
    display: flex;
    align-items: center;
    padding: 0 14px 0 1px;
    background-color: #f8eeec;
}

.logo {
    width: 14px;
    height: 14px;
    stroke: none;
}

.title {
    flex: 1;
    padding-left: 4px;
    font-size: 10px;
    letter-spacing: -0.15px;
}

.wincontrols {
    display: flex;
    gap: 23px;
}

.menubar {
    height: 16px;
    flex: none;
    display: flex;
    align-items: center;
    padding: 1px 3px 0 6px;
    background-color: #fff;
    font-size: 10px;
    letter-spacing: -0.27px;
    white-space: nowrap;
}

.m-fichier { width: 40.500px; }
.m-edition { width: 43.500px; }
.m-vue { width: 29px; }
.m-dessin { width: 40.500px; }
.m-doc { width: 80.500px; }
.m-options { width: 46.500px; }
.m-partage { width: 45px; }
.m-fenetres { width: 49px; }
.m-enscape { width: 48px; }
.m-aide { width: 30px; }

.doccontrols {
    margin-left: auto;
    display: flex;
    gap: 2px;
}

.doccontrols svg {
    width: 9px;
    height: 9px;
    stroke: #222;
}

/* Toolbars */
.toolbar {
    display: flex;
    align-items: center;
    flex: none;
    height: 26px;
}

.toolbar.first {
    height: 27px;
}

.sep {
    width: 1px;
    height: 22px;
    background-color: #b5b5b5;
}

.sep.short {
    height: 14px;
}

.tool {
    width: 20px;
    height: 23px;
    display: flex;
    align-items: center;
    justify-content: center;
}

.tool .ic {
    width: 15px;
    height: 15px;
}

.tool.active {
    background-color: #cde6f9;
    border: 1px solid #b3d7f2;
    border-radius: 2px;
}

.caret {
    width: 14px;
    height: 22px;
    display: flex;
    align-items: center;
    justify-content: center;
}

.caret::before {
    content: "";
    border: 3px solid transparent;
    border-top: 4px solid #111;
    border-bottom: 0;
}

.caret.grey::before {
    border-top-color: #888;
}

.group {
    display: flex;
    gap: 1px;
    margin-left: 5px;
}

.pair {
    display: flex;
    background-color: #bfdff4;
}

.pair .tool {
    width: 24px;
}

.pair .caret {
    width: 12px;
    height: 23px;
    border-left: 1px solid #acd2ec;
}

.g1 { margin-left: 1px; }
.g2 { margin-left: 2px; }
.g3 { margin-left: 3px; }
.g4 { margin-left: 4px; }
.g5 { margin-left: 5px; }
.g6 { margin-left: 6px; }
.g7 { margin-left: 7px; }

/* Info box */
.infobox {
    height: 53px;
    flex: none;
    border-top: 1px solid #dcdcdc;
}

.infolabel {
    height: 15px;
    padding-left: 8px;
    font-size: 8px;
    line-height: 12px;
    letter-spacing: -0.15px;
    color: #2f3a2f;
}

.inforow {
    display: flex;
    align-items: flex-end;
    height: 28px;
    gap: 2px;
    padding-left: 3px;
}

.grip {
    width: 1px;
    height: 22px;
    margin-right: 3px;
    margin-bottom: 6px;
    background-color: #b5b5b5;
}

.field {
    width: 33px;
    height: 15px;
    display: flex;
    align-items: center;
    justify-content: flex-end;
    padding-right: 2px;
    background-color: #fff;
    border-radius: 2px;
    box-shadow: 0 1px 1px #ccc;
}

.field .ic {
    margin-right: 5px;
}

.field.selected {
    background-color: #c9e3f6;
    border: 1px solid #5b94c4;
    box-shadow: none;
}

.field.tall {
    width: 40px;
    height: 23px;
    margin-bottom: 1px;
    padding-right: 2px;
}

.field.tall .ic {
    margin-right: 9px;
}

.rt {
    width: 0;
    height: 0;
    border: 3px solid transparent;
    border-left: 4px solid #222;
    border-right: 0;
}

/* Main area */
.workspace {
    display: flex;
    height: 520px;
    flex: none;
}

.toolbox {
    width: 35px;
    display: flex;
    flex-direction: column;
    align-items: center;
    border-right: 1px solid #e3e3e3;
}

.toolbox .handle {
    width: 14px;
    height: 1px;
    margin: 4px 0 3px;
    background-color: #999;
}

.tb {
    width: 34px;
    height: 25.250px;
    display: flex;
    align-items: center;
    justify-content: center;
}

.tb.on {
    height: 23px;
    background-color: #c8e2f6;
}

.tb.on + .tb {
    height: 30px;
}

.tb .wide {
    width: 20px;
    height: 18px;
}

.tb text {
    font: bold 6.500px "Open Sans", sans-serif;
    fill: #333;
    stroke: none;
}

.tb text.al {
    font-size: 9px;
    font-weight: normal;
}

.tb text.a1 {
    font-size: 12px;
    font-weight: normal;
}

.tlabel {
    width: 34px;
    height: 16px;
    flex: none;
    margin-bottom: 1.700px;
    padding-left: 1px;
    line-height: 16px;
    letter-spacing: -0.15px;
    background-color: #d8d8d8;
    border-radius: 2px;
}

.center {
    width: 1095px;
    display: flex;
    flex-direction: column;
}

.tabs {
    display: flex;
    height: 20px;
    flex: none;
    padding-top: 1px;
    background-color: #d8d8d8;
    border-top: 1px solid #ddd;
    line-height: 18px;
    letter-spacing: -0.32px;
}

.overview {
    width: 21px;
    display: flex;
    align-items: center;
    justify-content: center;
}

.tab {
    display: flex;
    align-items: center;
    width: 250px;
    padding: 0 0 0 3px;
    border-right: 1px solid #ccc;
}

.tab span {
    padding: 1px 0 0 1px;
}

.tab.current {
    width: 251px;
    padding-right: 7px;
    background-color: #fff;
    border: 0;
}

.tab em {
    margin-left: auto;
    font: bold 9px "DejaVu Sans", sans-serif;
}

.tabnav {
    margin-left: auto;
    width: 42px;
    display: flex;
    align-items: center;
    padding-left: 5px;
    background-color: #e6e6e6;
}

.tabnav .ic {
    width: 24px;
}

.tabnav .caret {
    width: 12px;
    height: 14px;
}

/* Plan */
.plan {
    width: 1095px;
    height: 483px;
    background-color: #fff;
}

.fills {
    stroke: none;
}

.plan pattern path {
    stroke: #555;
    stroke-width: 0.8;
}

.wall {
    stroke: #333;
    shape-rendering: crispEdges;
}

.thin {
    stroke: #999;
    stroke-width: 0.9;
}

.door {
    stroke: #de914f;
}

.leaf {
    fill: #fdebd3;
}

.wire {
    stroke: #888;
    stroke-width: 0.9;
}

.wire use {
    stroke: #888;
}

.soft {
    stroke: #aaa;
    stroke-width: 1.200;
}

.corners {
    stroke: #222;
    shape-rendering: crispEdges;
}

.rooms text {
    font: 20px "Liberation Sans", Arial, sans-serif;
    letter-spacing: -0.1px;
    fill: #000;
    stroke: none;
}

.snap {
    stroke: #f08c3c;
    stroke-dasharray: 4 2;
}

.chip {
    fill: #eee;
    fill-opacity: 0.7;
    stroke: none;
}

.cursor {
    fill: #000;
    stroke: #000;
    stroke-width: 0.7;
}

.tick {
    stroke: #555;
}

/* Quick options */
.quickbar {
    display: flex;
    height: 17px;
    font-size: 9px;
    white-space: nowrap;
    letter-spacing: -0.2px;
}

.views {
    width: 60px;
    display: flex;
    align-items: center;
    gap: 4px;
    padding-left: 2px;
}

.quickbar .ic {
    width: 15px;
    height: 15px;
}

.opt {
    width: 103.900px;
    display: flex;
    align-items: center;
    border-left: 1px solid #bbb;
    padding: 0 5px 0 4px;
}

.quickbar .opt .ic {
    width: 14px;
    height: 14px;
}

.opt span {
    flex: 1;
    text-align: center;
}

.opt.last {
    width: 100px;
}

/* Navigator */
.navigator {
    width: 150px;
    display: flex;
    flex-direction: column;
}

.navigator .handle {
    width: 57px;
    height: 1px;
    margin: 4px 0 3px 46px;
    background-color: #999;
}

.navtabs {
    display: flex;
    height: 27px;
    flex: none;
}

.chooser {
    width: 36px;
    height: 25px;
    margin: 1px 12px 0 2px;
    display: flex;
    align-items: center;
    gap: 6px;
    padding-left: 8px;
    background-color: #fff;
    border: 1px solid #ddd;
    border-radius: 3px;
}

.chooser .ic {
    width: 14px;
}

.nt {
    width: 25px;
    height: 25px;
    display: flex;
    align-items: center;
    justify-content: center;
}

.nt.on {
    background-color: #cbe4f8;
    border: 1px solid #aacfee;
    border-radius: 2px;
}

.treewrap {
    display: flex;
    height: 383px;
    flex: none;
}

.tree {
    width: 135px;
    overflow: hidden;
    background-color: #fff;
    font-size: 9.100px;
}

.row {
    display: flex;
    align-items: center;
    height: 18.680px;
    white-space: nowrap;
    letter-spacing: -0.42px;
    gap: 4px;
}

.l1 {
    padding-left: 11px;
}

.l2 {
    padding-left: 20px;
}

.l3 {
    padding-left: 29px;
}

.row .ic {
    width: 16px;
    height: 15px;
}

.row .open {
    width: 5px;
    height: 5px;
    margin: -3px -1px 0 -8px;
    border-right: 1px solid #222;
    border-bottom: 1px solid #222;
    transform: rotate(45deg);
}

.picked {
    background-color: #d6d6d6;
    font-weight: bold;
    color: #000;
}

.vscroll {
    width: 2px;
    height: 127px;
    margin: 52px 0 0 6px;
    background-color: #888;
}

.hscroll {
    width: 65px;
    height: 2px;
    margin: 5px 0 0 21px;
    background-color: #888;
}

.actions {
    display: flex;
    justify-content: flex-end;
    gap: 9px;
    height: 37px;
    flex: none;
    align-items: center;
    padding: 4px 6px 0 0;
}

.prophead {
    display: flex;
    align-items: center;
    gap: 7px;
    height: 18px;
    flex: none;
    margin: -2px 3px 0 2px;
    padding-left: 6px;
    background-color: #d4d4d4;
}

.dn {
    border: 3px solid transparent;
    border-top: 4px solid #222;
    border-bottom: 0;
}

.proprow {
    display: flex;
    align-items: center;
    height: 19px;
    flex: none;
    margin-top: 3px;
    padding: 0 3px 0 1px;
}

.proprow span {
    width: 35px;
    padding-left: 2px;
}

.proprow .input {
    flex: 1;
    height: 16px;
    padding-left: 2px;
    line-height: 15px;
    background-color: #fff;
    border-bottom: 1px solid #999;
}

.button {
    height: 17px;
    flex: none;
    margin: 1px 3px 0 2px;
    line-height: 17px;
    text-align: center;
    background-color: #fff;
    border-radius: 3px;
    box-shadow: 0 0 1px #999;
}

/* Status bar */
.status {
    height: 20px;
    flex: none;
    display: flex;
    align-items: center;
    padding-left: 1px;
    font-size: 10px;
    border-bottom: 1px solid #c9c0bf;
}

.hint {
    width: 1132px;
    white-space: nowrap;
    letter-spacing: -0.265px;
}

.gid {
    margin-left: 4px;
    padding: 0 13px 0 12px;
    border-left: 1px solid #ddd;
    border-right: 1px solid #ddd;
    font: 11px/18px Lato, sans-serif;
    letter-spacing: 0;
    color: #aaa;
    white-space: nowrap;
}

/* Taskbar */
.taskbar {
    height: 39px;
    flex: none;
    display: flex;
    align-items: center;
    background-color: #f9e7e5;
}

.weather {
    width: 335px;
    display: flex;
    align-items: center;
    gap: 7px;
    padding-left: 18px;
    font-size: 10px;
    line-height: 13px;
}

.dim {
    color: #777;
}

.sun {
    width: 17px;
    height: 17px;
    border-radius: 50%;
    background: linear-gradient(160deg, #efb040, #e0681c);
}

.start {
    width: 20px;
    height: 20px;
    stroke: none;
}

.search {
    width: 181px;
    height: 26px;
    margin: 0 2px 0 11px;
    display: flex;
    align-items: center;
    gap: 9px;
    padding-left: 8px;
    border-radius: 13px;
    background-color: #fdf7f6;
    box-shadow: 0 1px 1px #e3d0ce;
    font-size: 11.500px;
    color: #666;
}

.search svg {
    width: 13px;
    height: 13px;
    stroke: #222;
    stroke-width: 1.500;
}

.apps {
    display: flex;
}

.apps b {
    position: relative;
    width: 36.800px;
    height: 34px;
    display: flex;
    align-items: center;
    justify-content: center;
}

.apps svg {
    width: 22px;
    height: 22px;
    stroke: none;
}

.letter {
    position: absolute;
    left: 9px;
    top: 10px;
    width: 10px;
    text-align: center;
    font: bold 8px/14px "Open Sans", sans-serif;
    color: #fff;
}

.badge {
    position: absolute;
    left: 19px;
    top: 3px;
    width: 13px;
    height: 13px;
    border-radius: 50%;
    text-align: center;
    font: 9px/13px "Open Sans", sans-serif;
    background-color: #1674c1;
    color: #fff;
}

.apps .running {
    width: 32px;
    margin: 0 2.400px;
    border-radius: 3px;
    background-color: #fcf5f4;
}

.running::after,
.opened::after {
    content: "";
    position: absolute;
    bottom: 1px;
    width: 13px;
    height: 2px;
    border-radius: 1px;
    background-color: #1d70b5;
}

.opened::after {
    width: 5px;
    background-color: #888;
}

.tray {
    display: flex;
    align-items: center;
    margin-left: auto;
    padding-right: 15px;
    font-size: 10px;
    line-height: 13px;
    letter-spacing: -0.1px;
}

.tray svg {
    width: 15px;
    height: 15px;
    stroke: #222;
}

.tray .blue {
    stroke: #3d62a8;
}

.t-cloud {
    margin-left: 12px;
}

.t-mic {
    margin-left: 11px;
}

.lang {
    width: 30px;
    margin-left: 9px;
    text-align: center;
}

.t-wifi {
    margin-left: 10px;
}

.t-vol {
    margin-left: 4px;
}

.t-bat {
    margin-left: 6px;
}

.clock {
    width: 65px;
    text-align: right;
    white-space: nowrap;
}

.t-bell {
    margin-left: 5px;
}
```
